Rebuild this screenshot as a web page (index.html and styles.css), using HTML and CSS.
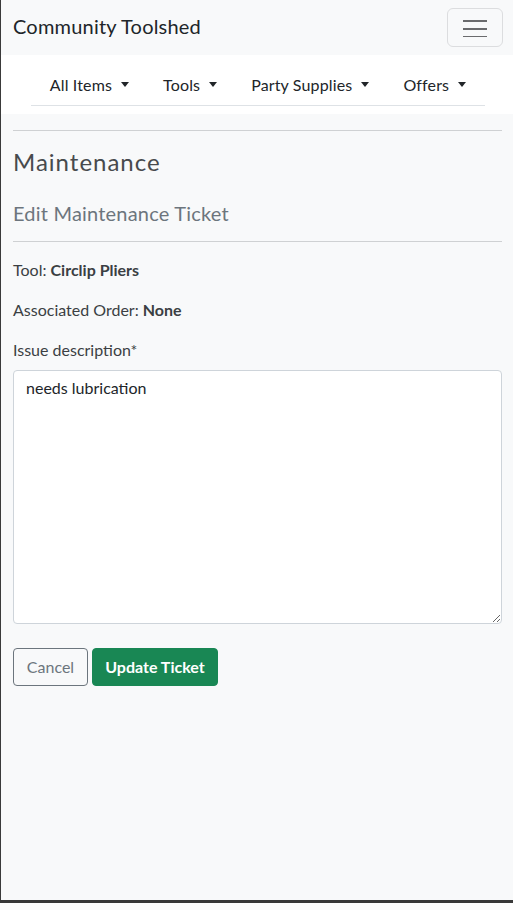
FILE: index.html
```html
<!DOCTYPE html>
<html lang="en">
<head>
<meta charset="utf-8">
<title>Community Toolshed</title>
<link rel="stylesheet" href="styles.css">
</head>
<body>
<header class="navbar">
  <div class="navbar-top">
    <a class="brand" href="#">Community Toolshed</a>
    <button class="toggler" type="button" aria-label="Toggle navigation">
      <svg width="24" height="18" viewBox="0 0 24 18"><path d="M0 2h24M0 10h24M0 18h24" stroke="#6a6b6d" stroke-width="2"/></svg>
    </button>
  </div>
  <nav class="subnav">
    <ul class="subnav-list">
      <li><a href="#" class="nav-link">All Items<span class="caret"></span></a></li>
      <li><a href="#" class="nav-link">Tools<span class="caret"></span></a></li>
      <li><a href="#" class="nav-link">Party Supplies<span class="caret"></span></a></li>
      <li><a href="#" class="nav-link">Offers<span class="caret"></span></a></li>
    </ul>
  </nav>
</header>
<main class="container">
  <hr class="rule">
  <h1 class="page-title">Maintenance</h1>
  <h2 class="page-subtitle">Edit Maintenance Ticket</h2>
  <hr class="rule">
  <p class="info">Tool: <strong>Circlip Pliers</strong></p>
  <p class="info">Associated Order: <strong>None</strong></p>
  <form class="form">
    <label class="form-label" for="desc">Issue description*</label>
    <textarea id="desc" class="form-control" rows="10">needs lubrication</textarea>
    <div class="actions">
      <button type="button" class="btn btn-outline">Cancel</button>
      <button type="submit" class="btn btn-success">Update Ticket</button>
    </div>
  </form>
</main>
</body>
</html>
```
FILE: styles.css
```css
html {
  background: #3a3a3a;
}
body {
  margin: 0 0 0 1px;
  min-height: 900px;
  background: #f8f9fa;
  font-family: Lato, "Noto Sans", sans-serif;
  font-size: 16px;
  line-height: 24px;
  color: #212529;
}
.navbar-top {
  height: 55px;
  display: flex;
  align-items: center;
  justify-content: space-between;
  padding: 0 10px 0 12px;
  background: #f8f9fa;
}
.brand {
  font-size: 20px;
  color: #212529;
  text-decoration: none;
  letter-spacing: 0.2px;
  padding-bottom: 3px;
}
.toggler {
  width: 56px;
  height: 39px;
  border: 1px solid #dcdddf;
  border-radius: 6px;
  background: transparent;
  display: flex;
  align-items: center;
  justify-content: center;
  padding: 0;
}
.subnav {
  background: #fff;
  height: 59px;
  padding: 0 28px 0 30px;
}
.subnav-list {
  list-style: none;
  margin: 0;
  padding: 9px 0 0;
  box-sizing: border-box;
  height: 51px;
  display: flex;
  justify-content: center;
  align-items: center;
  border-bottom: 1px solid #dee2e6;
}
.nav-link {
  display: flex;
  align-items: center;
  padding: 8px 17px;
  color: #212529;
  text-decoration: none;
  font-size: 16px;
  letter-spacing: 0.15px;
}
.caret {
  display: inline-block;
  margin-left: 9px;
  width: 0;
  height: 0;
  border-top: 5px solid #212529;
  border-left: 4.5px solid transparent;
  border-right: 4.5px solid transparent;
}
.container {
  padding: 0 11px 0 12px;
}
.rule {
  margin: 16px 0;
  border: 0;
  border-top: 1px solid #cfd1d3;
}
.page-title {
  margin: 0 0 25px;
  font-size: 24px;
  line-height: 29px;
  font-weight: 400;
  letter-spacing: 1px;
  color: #474a4d;
}
.page-subtitle {
  margin: 0;
  font-size: 20px;
  line-height: 24px;
  font-weight: 400;
  letter-spacing: 0.2px;
  color: #6c757d;
}
.info {
  margin: 0 0 16px;
  font-size: 16px;
  color: #3b3f43;
}
.info strong {
  font-weight: 700;
}
.form-label {
  display: block;
  margin-bottom: 8px;
  font-size: 16px;
  color: #3b3f43;
}
.form-control {
  display: block;
  box-sizing: border-box;
  width: 100%;
  height: 254px;
  margin: 0 0 24px;
  padding: 5px 12px 6px;
  border: 1px solid #ced4da;
  border-radius: 4px;
  background: #fff;
  font-family: inherit;
  font-size: 16px;
  line-height: 24px;
  color: #212529;
  resize: vertical;
}
.actions {
  display: flex;
  gap: 4px;
}
.btn {
  height: 38px;
  padding: 0 12px 1px;
  border-radius: 4px;
  font-family: inherit;
  font-size: 16px;
  line-height: 24px;
  cursor: pointer;
}
.btn-outline {
  width: 75px;
  background: transparent;
  border: 1px solid #6c757d;
  color: #6c757d;
}
.btn-success {
  width: 126px;
  background: #198754;
  border: 1px solid #198754;
  color: #fff;
  font-weight: 700;
}
```
